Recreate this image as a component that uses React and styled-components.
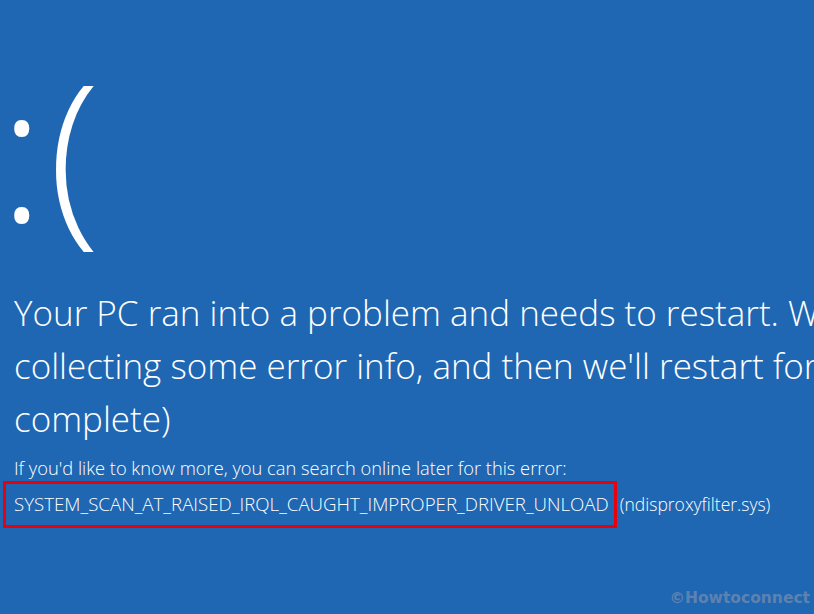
import styled, { createGlobalStyle } from "styled-components";

const Global = createGlobalStyle`
  html, body {
    margin: 0;
    padding: 0;
    background: #1f67b2;
  }
`;

function App() {
  return (
    <Screen>
      <Global />
      <Face>:(</Face>
      <Message>
        <Line>Your PC ran into a problem and needs to restart. We're just</Line>
        <Line>collecting some error info, and then we'll restart for you. (0%</Line>
        <Line>complete)</Line>
      </Message>
      <Hint>If you'd like to know more, you can search online later for this error:</Hint>
      <CodeRow>
        <Highlight>SYSTEM_SCAN_AT_RAISED_IRQL_CAUGHT_IMPROPER_DRIVER_UNLOAD</Highlight>
        <Driver>(ndisproxyfilter.sys)</Driver>
      </CodeRow>
      <Watermark>©Howtoconnect</Watermark>
    </Screen>
  );
}
export default App;

const Screen = styled.div`
  position: relative;
  width: 814px;
  height: 614px;
  overflow: hidden;
  background: #1f67b2;
  color: #ffffff;
  font-family: "Open Sans", "Noto Sans", sans-serif;
  box-sizing: border-box;
  padding: 54px 0 0 14px;
`;

const Face = styled.div`
  font-size: 190px;
  font-weight: 300;
  line-height: 1;
  margin-left: -15px;
  letter-spacing: 4px;
  height: 232px;
  white-space: nowrap;
`;

const Message = styled.div`
  font-weight: 300;
  font-size: 35px;
  line-height: 53px;
  white-space: nowrap;
`;

const Line = styled.div``;

const Hint = styled.div`
  margin-top: 12px;
  font-size: 18.3px;
  font-weight: 300;
  line-height: 22px;
  white-space: nowrap;
`;

const CodeRow = styled.div`
  display: flex;
  align-items: flex-start;
  margin-left: -11px;
  margin-top: 2px;
  white-space: nowrap;
`;

const Highlight = styled.span`
  border: 3px solid #e8000b;
  padding: 10px 5px 11px 8px;
  font-size: 18.7px;
  font-weight: 300;
  line-height: 20px;
`;

const Driver = styled.span`
  margin-left: 3px;
  padding-top: 13px;
  font-size: 17.5px;
  font-weight: 300;
  line-height: 20px;
`;

const Watermark = styled.div`
  position: absolute;
  right: 4px;
  bottom: 7px;
  font-family: "DejaVu Sans", sans-serif;
  font-weight: bold;
  font-size: 15.5px;
  color: #5e82b0;
`;
